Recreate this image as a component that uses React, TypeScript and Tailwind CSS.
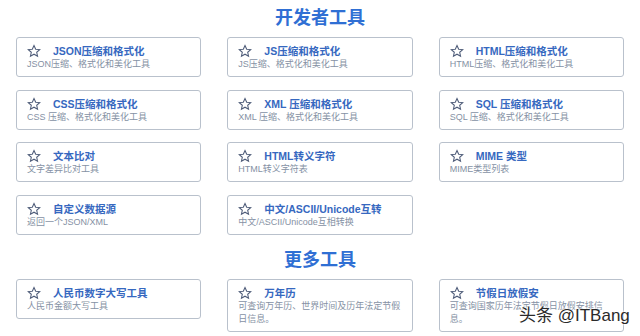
import React from "react";

type Tool = { title: string; desc: string };

const dev: Tool[] = [
  { title: "JSON压缩和格式化", desc: "JSON压缩、格式化和美化工具" },
  { title: "JS压缩和格式化", desc: "JS压缩、格式化和美化工具" },
  { title: "HTML压缩和格式化", desc: "HTML压缩、格式化和美化工具" },
  { title: "CSS压缩和格式化", desc: "CSS 压缩、格式化和美化工具" },
  { title: "XML 压缩和格式化", desc: "XML 压缩、格式化和美化工具" },
  { title: "SQL 压缩和格式化", desc: "SQL 压缩、格式化和美化工具" },
  { title: "文本比对", desc: "文字差异比对工具" },
  { title: "HTML转义字符", desc: "HTML转义字符表" },
  { title: "MIME 类型", desc: "MIME类型列表" },
  { title: "自定义数据源", desc: "返回一个JSON/XML" },
  { title: "中文/ASCII/Unicode互转", desc: "中文/ASCII/Unicode互相转换" },
];

const more: Tool[] = [
  { title: "人民币数字大写工具", desc: "人民币金额大写工具" },
  { title: "万年历", desc: "可查询万年历、世界时间及历年法定节假日信息。" },
  { title: "节假日放假安", desc: "可查询国家历年法定节假日放假安排信息。" },
];

function StarIcon() {
  return (
    <svg width="14" height="14" viewBox="0 0 24 24" fill="none" stroke="#4d5b78" strokeWidth="1.8" strokeLinejoin="miter" className="shrink-0">
      <polygon points="12,2.5 14.9,8.9 21.8,9.6 16.6,14.2 18.1,21 12,17.5 5.9,21 7.4,14.2 2.2,9.6 9.1,8.9" />
    </svg>
  );
}

function Card({ t }: { t: Tool }) {
  return (
    <div className="border border-[#b9c1cc] rounded-[3px] bg-white pl-[10px] pr-[6px] pt-[6px] pb-[5px]">
      <div className="flex items-center gap-[12px] h-[14px]">
        <StarIcon />
        <span className="text-[10.5px] leading-[14px] font-bold text-[#3668c0] whitespace-nowrap">{t.title}</span>
      </div>
      <div className="text-[9px] leading-[13px] text-[#8591a4]">{t.desc}</div>
    </div>
  );
}

export default function App() {
  return (
    <div
      className="relative w-[640px] h-[336px] bg-white overflow-hidden px-[16px]"
      style={{ fontFamily: '"Liberation Sans", "Noto Sans CJK SC", sans-serif' }}
    >
      <h1 className="pt-[7px] text-center text-[18px] leading-[22px] font-bold text-[#2f6fd4]">开发者工具</h1>
      <div className="mt-[8px] grid grid-cols-3 gap-x-[26px] gap-y-[12.5px]">
        {dev.map((t) => (
          <Card key={t.title} t={t} />
        ))}
      </div>
      <h2 className="mt-[14px] text-center text-[18px] leading-[22px] font-bold text-[#2f6fd4]">更多工具</h2>
      <div className="mt-[8px] grid grid-cols-3 gap-x-[26px] items-start">
        {more.map((t) => (
          <Card key={t.title} t={t} />
        ))}
      </div>
      <div
        className="absolute left-[519px] top-[306px] text-[17px] leading-[20px] text-[#2a2a2a] whitespace-nowrap"
        style={{ textShadow: "0 0 2px #fff, 0 0 2px #fff, 0 0 3px #fff" }}
      >
        头条 @ITBang
      </div>
    </div>
  );
}
